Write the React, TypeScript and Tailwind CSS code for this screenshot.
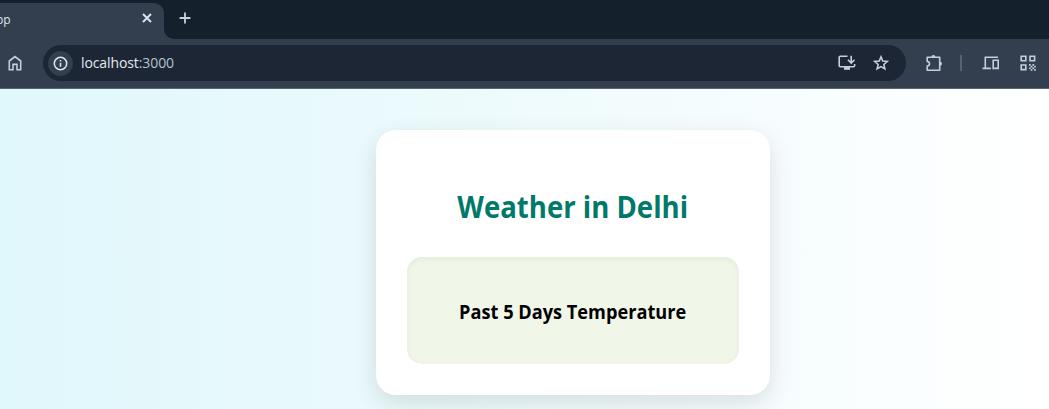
import React from "react";

const stroke = {
  fill: "none",
  stroke: "currentColor",
  strokeWidth: 1.6,
} as const;

function TabStrip() {
  return (
    <div className="flex h-[39px] shrink-0 bg-[#15202d] pt-[3px]">
      <div className="flex h-9 w-[164px] items-center justify-between overflow-hidden rounded-tr-[10px] bg-[#333e4e] pr-[11px] text-[#dfe5ee]">
        <span className="-ml-[4px] -mt-[2px] text-[12px] leading-4">pp</span>
        <svg width="12" height="12" viewBox="0 0 12 12" className="-mt-[6px]" fill="none" stroke="currentColor" strokeWidth="1.9">
          <path d="M2 2 10 10M10 2 2 10" />
        </svg>
      </div>
      <svg width="10" height="10" viewBox="0 0 10 10" className="self-end text-[#333e4e]">
        <path d="M0 0A10 10 0 0 0 10 10H0Z" fill="currentColor" />
      </svg>
      <svg width="12" height="12" viewBox="0 0 12 12" className="ml-[5px] mt-[9px] text-[#c8d1df]" fill="none" stroke="currentColor" strokeWidth="1.8">
        <path d="M6 .6v10.8M.6 6h10.8" />
      </svg>
    </div>
  );
}

function Toolbar() {
  return (
    <div className="flex h-[50px] shrink-0 items-center border-b border-[#596472] bg-[#333e4e] pb-px text-[#c3cedf]">
      <svg width="14" height="16" viewBox="0 0 14 16" className="ml-[8px] shrink-0" {...stroke}>
        <path d="M1.3 6 7 1.5 12.7 6v8.7H9V9.4H5v5.3H1.3Z" />
      </svg>
      <div className="ml-[21px] flex h-9 w-[863px] shrink-0 items-center rounded-full bg-[#1c2635]">
        <div className="ml-[5px] flex size-[25px] items-center justify-center rounded-full bg-[#333e4e] text-[#e0e6f0]">
          <svg width="15" height="15" viewBox="0 0 15 15" fill="none" stroke="currentColor" strokeWidth="1.5">
            <circle cx="7.5" cy="7.5" r="6.2" />
            <path d="M7.5 6.7v4.1M7.5 4v1.5" />
          </svg>
        </div>
        <div className="ml-[8px] origin-left scale-x-[0.965] text-[14.5px] leading-5 tracking-[-0.1px] text-[#e4e9f1]">
          localhost<span className="text-[#b7c1d0]">:3000</span>
        </div>
        <svg width="18" height="16" viewBox="0 0 18 16" className="ml-auto mr-[17px]" {...stroke}>
          <path d="M9.5 1.3H2.2q-1 0-1 1v8.4q0 1 1 1h13.4q1 0 1-1V9" />
          <path d="M13.2.7v7M9.9 4.7l3.3 3.3 3.3-3.3" />
          <path d="M6 12h6v2.8H6Z" fill="currentColor" stroke="none" />
        </svg>
        <svg width="16" height="16" viewBox="0 0 16 16" className="mr-[17px]" fill="none" stroke="currentColor" strokeWidth="1.6">
          <path d="m8 1.9 1.75 4.2 4.55.4-3.45 3 1.03 4.45L8 11.6l-3.88 2.35L5.15 9.5l-3.45-3 4.55-.4Z" />
        </svg>
      </div>
      <svg width="18" height="18" viewBox="0 0 18 18" className="ml-[19px] shrink-0" {...stroke}>
        <path d="M2.2 3.3h12.5v12.9H2.2v-4.1q2.3-.3 2.3-2.3T2.2 7.4Z" strokeLinejoin="round" />
        <path d="M6.4 3a2 2 0 0 1 4 0ZM15 7.7a2 2 0 0 1 0 4Z" fill="currentColor" stroke="none" />
      </svg>
      <div className="ml-[17px] h-4 w-[1.5px] bg-[#566274]" />
      <svg width="18" height="16" viewBox="0 0 18 16" className="ml-[20px] shrink-0" {...stroke}>
        <path d="M3.3 12.7V2.2H16M.5 13.4h8.4" />
        <path d="M11.2 5.2h5v8.2h-5Z" />
      </svg>
      <svg width="16" height="16" viewBox="0 0 16 16" className="ml-[20px] shrink-0" {...stroke}>
        <path d="M1.2 1.2h4.6v4.6H1.2ZM10 1.2h4.6v4.6H10ZM1.2 10h4.6v4.6H1.2Z" />
        <path
          d="M9 9h1.7v1.7H9ZM12.4 9h1.7v1.7h-1.7ZM10.7 10.7h1.7v1.7h-1.7ZM14.1 10.7h1.7v1.7h-1.7ZM9 12.4h1.7v1.7H9ZM12.4 12.4h1.7v1.7h-1.7ZM10.7 14.1h1.7v1.7h-1.7ZM14.1 14.1h1.7v1.7h-1.7Z"
          fill="currentColor"
          stroke="none"
        />
      </svg>
    </div>
  );
}

function WeatherCard() {
  return (
    <section className="ml-[376px] mt-[41px] flex h-[265px] w-[394px] shrink-0 flex-col items-center rounded-[20px] bg-white px-[31px] pt-[57px] shadow-[0_8px_24px_rgba(0,0,0,0.12)]">
      <h1 className="origin-center scale-x-[0.918] whitespace-nowrap text-[30px] font-bold leading-10 text-[#00796b]">
        Weather in Delhi
      </h1>
      <div className="mt-[30px] flex h-[107px] w-full items-center justify-center rounded-[15px] bg-[#f0f6e8] pt-[3px] shadow-[inset_0_2px_6px_rgba(0,0,0,0.05)]">
        <h2 className="origin-center scale-x-[0.957] whitespace-nowrap text-[19px] font-bold leading-6 text-black">
          Past 5 Days Temperature
        </h2>
      </div>
    </section>
  );
}

export default function App() {
  return (
    <div className="flex h-[409px] w-full flex-col overflow-hidden font-['Open_Sans','Noto_Sans',sans-serif]">
      <TabStrip />
      <Toolbar />
      <main className="flex min-h-0 flex-1 flex-col overflow-hidden bg-linear-to-r from-[#e0f7fb] via-[#ebfafc] via-38% to-white">
        <WeatherCard />
      </main>
    </div>
  );
}
